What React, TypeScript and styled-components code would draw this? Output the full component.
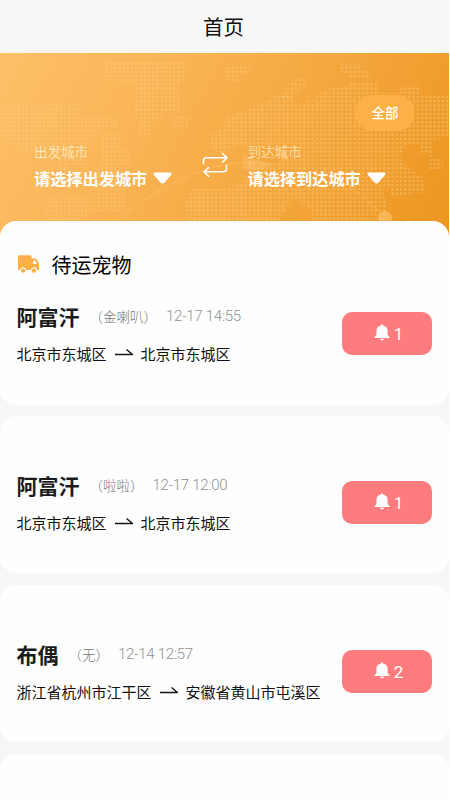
import React from 'react';
import styled, { createGlobalStyle } from 'styled-components';

const GlobalStyle = createGlobalStyle`
  * { box-sizing: border-box; }
  html, body { margin: 0; background: #fff; }
  body { font-family: "Noto Sans CJK SC", sans-serif; color: #111; overflow: hidden; }
`;

const Screen = styled.div`
  width: 449px;
  height: 800px;
  overflow: hidden;
  background: #f7f7f9;
  display: flex;
  flex-direction: column;
`;

const TitleBar = styled.header`
  flex: none;
  height: 53px;
  display: flex;
  align-items: center;
  justify-content: center;
  background: #f7f7f7;
  font-size: 20.5px;
  line-height: 24px;
  padding: 0 2px 2px 0;
`;

const Hero = styled.section`
  flex: none;
  position: relative;
  height: 198px;
  margin-bottom: -30px;
  background: linear-gradient(118deg, #fec068 0%, #fab557 30%, #f5a840 60%, #ee9a28 88%, #ed9720 100%);
  color: #fff;
`;

const MapArt = styled.svg`
  position: absolute;
  inset: 0;
  width: 100%;
  height: 100%;
`;

const HeroBody = styled.div`
  position: relative;
  height: 100%;
  padding-top: 42px;
  display: flex;
  flex-direction: column;
`;

const AllButton = styled.button`
  align-self: flex-end;
  width: 60px;
  height: 36px;
  margin-right: 34px;
  padding: 0 0 2px;
  border: 0;
  border-radius: 18px;
  background: #fdb045;
  color: #fff;
  font: 500 13.5px/20px "Noto Sans CJK SC", sans-serif;
`;

const CityRow = styled.div`
  display: flex;
  margin-top: 10px;
  padding-left: 34px;
`;

const CityField = styled.div`
  width: 138px;
  flex: none;
`;

const CityLabel = styled.div`
  font-size: 13.5px;
  line-height: 20px;
  font-weight: 300;
  color: #fff3d2;
`;

const CityValue = styled.div`
  display: flex;
  align-items: center;
  gap: 6px;
  margin-top: 5px;
  font-size: 16.2px;
  line-height: 24px;
  font-weight: 700;
  white-space: nowrap;
`;

const Caret = styled.svg`
  flex: none;
  width: 19px;
  height: 12px;
  margin-top: -1px;
`;

const Swap = styled.svg`
  flex: none;
  width: 26px;
  height: 26px;
  margin: 11px 20px 0 29.5px;
`;

const Card = styled.article<{ $first?: boolean }>`
  flex: none;
  position: relative;
  height: ${p => (p.$first ? 184 : 157)}px;
  margin-bottom: ${p => (p.$first ? 11 : 12)}px;
  padding: ${p => (p.$first ? 29 : 54)}px 17px 0 16.5px;
  border-radius: 16px;
  background: #fefefe;
`;

const SectionTitle = styled.h2`
  display: flex;
  align-items: center;
  gap: 12px;
  height: 30px;
  margin: 0 0 21px;
  font-size: 20px;
  line-height: 30px;
  font-weight: 400;
  color: #000;
`;

const Truck = styled.svg`
  width: 23px;
  height: 20px;
  margin-top: -2px;
`;

const Order = styled.div`
  display: flex;
  justify-content: space-between;
`;

const Details = styled.div`
  margin-top: -1px;
  white-space: nowrap;
`;

const PetLine = styled.div`
  display: flex;
  align-items: center;
  height: 32px;
`;

const PetName = styled.span`
  font-size: 21px;
  line-height: 32px;
  font-weight: 700;
  color: #1b1b1b;
`;

const Nick = styled.span`
  margin-left: 10px;
  font-size: 13.5px;
  font-weight: 300;
  color: #777;
`;

const Time = styled.time`
  margin-left: 9px;
  font-family: Roboto, "Noto Sans CJK SC", sans-serif;
  font-size: 15px;
  letter-spacing: -0.25px;
  font-weight: 300;
  color: #929292;
`;

const Route = styled.div`
  display: flex;
  align-items: center;
  gap: 7px;
  height: 24px;
  margin-top: 10px;
  font-size: 15px;
  line-height: 24px;
`;

const RouteArrow = styled.svg`
  width: 20px;
  height: 10px;
  margin-top: -4px;
`;

const Notice = styled.button`
  display: flex;
  align-items: center;
  justify-content: center;
  gap: 4px;
  width: 90px;
  height: 43px;
  margin: 11px 0 0;
  padding: 0;
  border: 0;
  border-radius: 10px;
  background: #ff7c7e;
  color: #fff;
  font: 400 17px/24px Roboto, "Noto Sans CJK SC", sans-serif;
`;

const Bell = styled.svg`
  width: 16px;
  height: 17px;
  margin: -2px 0 0 3px;
`;

function WorldMap() {
  return (
    <MapArt viewBox="0 0 449 198" aria-hidden="true">
      <defs>
        <pattern id="dots" width="4.2" height="4.2" patternUnits="userSpaceOnUse">
          <rect x="0.8" y="0.8" width="2.4" height="2.4" rx="0.8" fill="#ffdc9b" />
        </pattern>
      </defs>
      <g fill="url(#dots)">
        <path opacity=".28" d="M106 8H185V28H179V60H164V66H150V82H140V62H134V30H118V24H106Z" />
        <path opacity=".25" d="M0 51H80V62H118V74H105L95 90H90V112H67V120H58V101H27V99L0 86Z" />
        <path opacity=".24" d="M100 80H122V96H130V112H118V126H127V158H95V112H100ZM45 143H94V158L78 168H45ZM173 62H194V68H189V74H173Z" />
        <path opacity=".34" d="M225 14H250V20H240V29H229V23H225ZM340 11H360V18H369V26H350V20H340Z" />
        <path opacity=".32" d="M285 35 294 26H305V33L292 41V47H280Z" />
        <path opacity=".36" d="M318 41 330 35H345L353 29H377V40H400V32H421V41H449V82L433 89V104L443 107V116H430V101H419V91H407L399 105 410 116 424 125V140H415L391 144V135L383 133 386 151V168H310V156L292 144 279 168H187V145L195 136H225L247 126V106L257 112H273L290 99 270 94H235L220 101 210 94V81L225 75V66L244 57 264 50 273 43H291L298 55Z" />
      </g>
      <path d="M119 168Q154 134 202 118Q235 106 270 111" fill="none" stroke="#ffd490" strokeWidth="1" strokeDasharray="8 3" opacity=".4" />
      <path d="M342 130Q362 140 380 160" fill="none" stroke="#ffd490" strokeDasharray="5 3" opacity=".4" />
      <path d="M243 100Q255 109 274 110Q264 119 243 116Z" fill="#ffd999" opacity=".22" />
      <circle cx="385" cy="165" r="7" fill="#ffc66f" opacity=".6" />
    </MapArt>
  );
}

function CitySelect({ label, value }: { label: string; value: string }) {
  return (
    <CityField>
      <CityLabel>{label}</CityLabel>
      <CityValue>
        {value}
        <Caret viewBox="0 0 19 12">
          <path d="M2 .5H17Q19.5 .8 18 2.9L11.5 10.5Q9.5 12.4 7.5 10.5L1 2.9Q-.5 .8 2 .5Z" fill="#fff" />
        </Caret>
      </CityValue>
    </CityField>
  );
}

interface OrderData {
  name: string;
  nick: string;
  time: string;
  from: string;
  to: string;
  count: number;
}

const orders: OrderData[] = [
  { name: '阿富汗', nick: '金喇叭', time: '12-17 14:55', from: '北京市东城区', to: '北京市东城区', count: 1 },
  { name: '阿富汗', nick: '啦啦', time: '12-17 12:00', from: '北京市东城区', to: '北京市东城区', count: 1 },
  { name: '布偶', nick: '无', time: '12-14 12:57', from: '浙江省杭州市江干区', to: '安徽省黄山市屯溪区', count: 2 },
];

function OrderRow({ order }: { order: OrderData }) {
  return (
    <Order>
      <Details>
        <PetLine>
          <PetName>{order.name}</PetName>
          <Nick>（{order.nick}）</Nick>
          <Time>{order.time}</Time>
        </PetLine>
        <Route>
          <span>{order.from}</span>
          <RouteArrow viewBox="0 0 20 10">
            <path d="M1 7.5H18.5L12.5 2.5" fill="none" stroke="#151515" strokeWidth="1.4" strokeLinejoin="round" />
          </RouteArrow>
          <span>{order.to}</span>
        </Route>
      </Details>
      <Notice>
        <Bell viewBox="0 0 16 17">
          <path d="M7 1.5Q7 .3 8 .3T9 1.5Q13.6 2.3 13.6 7V11.2L15.5 13V14H.5V13L2.4 11.2V7Q2.4 2.3 7 1.5ZM6 14.8H10Q9.6 16.5 8 16.5T6 14.8Z" fill="#fff" />
        </Bell>
        {order.count}
      </Notice>
    </Order>
  );
}

export default function App() {
  return (
    <>
      <GlobalStyle />
      <Screen>
        <TitleBar>首页</TitleBar>
        <Hero>
          <WorldMap />
          <HeroBody>
            <AllButton>全部</AllButton>
            <CityRow>
              <CitySelect label="出发城市" value="请选择出发城市" />
              <Swap viewBox="0 0 26 26" fill="none" stroke="#fff" strokeWidth="1.6" strokeLinecap="round" strokeLinejoin="round">
                <path d="M1.5 11.5V8.5Q1.5 5.8 4.5 5.8H25M20.5 1.5 25 5.8 20.5 10.2M24.5 13.5V17Q24.5 19.8 21.5 19.8H2M6.5 15.5 2 19.8 6.5 24.2" />
              </Swap>
              <CitySelect label="到达城市" value="请选择到达城市" />
            </CityRow>
          </HeroBody>
        </Hero>
        {orders.map((order, i) => (
          <Card key={i} $first={i === 0}>
            {i === 0 && (
              <SectionTitle>
                <Truck viewBox="0 0 23 20">
                  <path d="M2 1.2H13.5Q14.5 1.2 14.5 2.2V4.5H18Q19 4.5 19.7 5.5L22 9V16H20.2A3.2 3.2 0 0 0 13.9 16H9.3A3.2 3.2 0 0 0 3 16H1V2.2Q1 1.2 2 1.2Z" fill="#fdb044" />
                  <path d="M16 6.5H18.3L20.2 10H16Z" fill="#fff" />
                  <circle cx="6.1" cy="16.6" r="2.2" fill="#fdb044" />
                  <circle cx="17" cy="16.6" r="2.2" fill="#fdb044" />
                </Truck>
                待运宠物
              </SectionTitle>
            )}
            <OrderRow order={order} />
          </Card>
        ))}
        <Card />
      </Screen>
    </>
  );
}
